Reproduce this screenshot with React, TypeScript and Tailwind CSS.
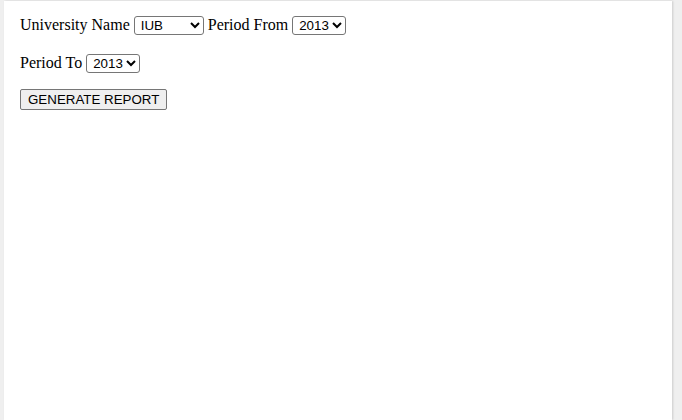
export default function App() {
  return (
    <div className="min-h-[420px] bg-[#efefef] pl-[4px] pr-[10px] pt-[1px]">
      <div className="min-h-[419px] bg-white px-4 pt-[13px] font-['Liberation_Serif',serif] text-[16px] leading-[22px] text-black shadow-[1px_0_2px_rgba(0,0,0,0.15)]">
        <p className="mb-4">
          University Name{" "}
          <select
            defaultValue="IUB"
            className="h-[19px] w-[70px] rounded-[3px] border border-[#767676] bg-white pl-[2px] font-['Liberation_Sans',sans-serif] text-[13.33px] align-baseline"
          >
            <option value="IUB">IUB</option>
            <option value="NSU">NSU</option>
            <option value="BRAC">BRAC</option>
          </select>{" "}
          Period From{" "}
          <select
            defaultValue="2013"
            className="h-[19px] rounded-[3px] border border-[#767676] bg-white pl-[2px] font-['Liberation_Sans',sans-serif] text-[13.33px] align-baseline"
          >
            <option value="2013">2013</option>
            <option value="2014">2014</option>
            <option value="2015">2015</option>
          </select>
        </p>
        <p className="mb-[14px]">
          Period To{" "}
          <select
            defaultValue="2013"
            className="h-[19px] rounded-[3px] border border-[#767676] bg-white pl-[2px] font-['Liberation_Sans',sans-serif] text-[13.33px] align-baseline"
          >
            <option value="2013">2013</option>
            <option value="2014">2014</option>
            <option value="2015">2015</option>
          </select>
        </p>
        <button
          type="button"
          className="h-[21px] rounded-[2px] border border-[#767676] bg-[#efefef] px-[7px] font-['Liberation_Sans',sans-serif] text-[13.33px] leading-none text-black"
        >
          GENERATE REPORT
        </button>
      </div>
    </div>
  );
}
